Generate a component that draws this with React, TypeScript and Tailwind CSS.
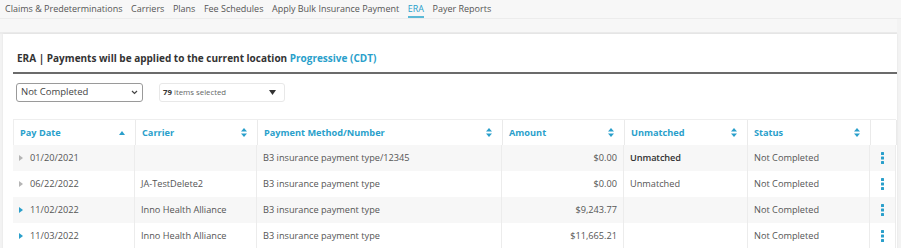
import React from 'react';

const teal = 'text-[#2a9fcb]';

const navItems = ['Claims & Predeterminations', 'Carriers', 'Plans', 'Fee Schedules', 'Apply Bulk Insurance Payment', 'ERA', 'Payer Reports'];

type Row = { date: string; carrier: string; method: string; amount: string; unmatched: string; strongUnmatched?: boolean; active: boolean };

const rows: Row[] = [
    { date: '01/20/2021', carrier: '', method: 'B3 insurance payment type/12345', amount: '$0.00', unmatched: 'Unmatched', strongUnmatched: true, active: false },
    { date: '06/22/2022', carrier: 'JA-TestDelete2', method: 'B3 insurance payment type', amount: '$0.00', unmatched: 'Unmatched', active: false },
    { date: '11/02/2022', carrier: 'Inno Health Alliance', method: 'B3 insurance payment type', amount: '$9,243.77', unmatched: '', active: true },
    { date: '11/03/2022', carrier: 'Inno Health Alliance', method: 'B3 insurance payment type', amount: '$11,665.21', unmatched: '', active: true },
];

const cols = 'grid grid-cols-[122px_122px_245px_122px_123px_123px_26px]';

const SortBoth = () => (
    <svg width="6" height="9" viewBox="0 0 6 9" className="fill-[#2a9fcb]">
        <path d="M3 0 L6 3.5 L0 3.5 Z" />
        <path d="M3 9 L6 5.5 L0 5.5 Z" />
    </svg>
);

const SortUp = () => (
    <svg width="6" height="4" viewBox="0 0 6 4" className="fill-[#2a9fcb]">
        <path d="M3 0 L6 4 L0 4 Z" />
    </svg>
);

const Kebab = () => (
    <svg width="3" height="12" viewBox="0 0 3 12" className="fill-[#2a9fcb]">
        <rect x="0" y="0" width="3" height="3" rx="0.5" />
        <rect x="0" y="4.5" width="3" height="3" rx="0.5" />
        <rect x="0" y="9" width="3" height="3" rx="0.5" />
    </svg>
);

const Header = ({ label, sort, border = true }: { label: string; sort?: 'up' | 'both'; border?: boolean }) => (
    <div className={`flex items-center justify-between px-[6px] h-full ${border ? 'border-r border-[#eaeaea]' : ''}`}>
        <span className={`font-bold ${teal}`}>{label}</span>
        {sort === 'up' && <span className="mr-[4px]"><SortUp /></span>}
        {sort === 'both' && <span className="mr-[4px]"><SortBoth /></span>}
    </div>
);

const App: React.FC = () => {
    return (
        <div className="w-[901px] h-[248px] overflow-hidden bg-[#f3f3f3] font-['Open_Sans',sans-serif] text-[#555]">
            {/* top nav */}
            <div className="h-[19px] flex items-end gap-[8.5px] pl-[5px] text-[9px] bg-[#f7f7f7] border-b border-[#ececec]">
                {navItems.map(item => (
                    <div
                        key={item}
                        className={`leading-[15px] ${item === 'ERA' ? `${teal} border-b-2 border-[#5bb9d6]` : 'border-b-2 border-transparent'}`}
                    >
                        {item}
                    </div>
                ))}
            </div>
            <div className="h-[15px] bg-[#f7f7f7] border-b-2 border-[#ebebeb] mr-[4px]" />

            {/* card */}
            <div className="ml-[3px] mr-[4px] h-[220px] bg-white shadow-[0_0_2px_rgba(0,0,0,0.08)] pl-[10px]">
                <div className="pt-[16px] pl-[4px] text-[10px] font-bold text-[#333] leading-[16px]">
                    ERA | Payments will be applied to the current location <span className={teal}>Progressive (CDT)</span>
                </div>
                <div className="mt-[6px] h-[2px] bg-[#6b6b6b]" />

                <div className="flex items-center gap-[16px] mt-[9px] pl-[3px]">
                    <div className="w-[127px] h-[19px] border border-[#9a9a9a] rounded-[3px] flex items-center justify-between px-[4px] text-[9.5px] text-[#444]">
                        <span>Not Completed</span>
                        <svg width="7" height="5" viewBox="0 0 7 5" className="stroke-[#444] fill-none">
                            <path d="M1 1 L3.5 3.5 L6 1" strokeWidth="1.2" />
                        </svg>
                    </div>
                    <div className="w-[126px] h-[19px] border border-[#e8e8e8] rounded-[3px] flex items-center justify-between pl-[3px] pr-[8px] text-[7.8px] text-[#666]">
                        <span><b className="text-[#333]">79</b> items selected</span>
                        <svg width="7" height="5" viewBox="0 0 7 5" className="fill-[#333]">
                            <path d="M0 0 L7 0 L3.5 5 Z" />
                        </svg>
                    </div>
                </div>

                {/* table */}
                <div className="mt-[17px] w-[883px] text-[9.2px]">
                    <div className={`${cols} h-[26px] border-t border-l border-[#eeeeee] items-center`}>
                        <Header label="Pay Date" sort="up" />
                        <Header label="Carrier" sort="both" />
                        <Header label="Payment Method/Number" sort="both" />
                        <Header label="Amount" sort="both" />
                        <Header label="Unmatched" sort="both" />
                        <Header label="Status" sort="both" />
                        <div className="h-full border-r border-[#eaeaea]" />
                    </div>
                    {rows.map((r, i) => (
                        <div key={i} className={`${cols} h-[26px] items-center ${i % 2 === 0 ? 'bg-[#f7f7f7]' : 'bg-white'}`}>
                            <div className="flex items-center h-full pl-[6px] border-r border-[#ececec]">
                                <svg width="4" height="6" viewBox="0 0 4 6" className={r.active ? 'fill-[#2a9fcb]' : 'fill-[#b5b5b5]'}>
                                    <path d="M0 0 L4 3 L0 6 Z" />
                                </svg>
                                <span className="ml-[7px]">{r.date}</span>
                            </div>
                            <div className="flex items-center h-full px-[6px] border-r border-[#ececec]">{r.carrier}</div>
                            <div className="flex items-center h-full px-[6px] border-r border-[#ececec]">{r.method}</div>
                            <div className="flex items-center justify-end h-full px-[6px] border-r border-[#ececec]">{r.amount}</div>
                            <div className={`flex items-center h-full px-[6px] ${r.strongUnmatched ? 'text-[#333] font-semibold tracking-[-0.1px]' : ''}`}>{r.unmatched}</div>
                            <div className="flex items-center h-full px-[6px] border-l border-r border-[#ececec]">Not Completed</div>
                            <div className="flex items-center justify-center h-full border-r border-[#ececec]">
                                <Kebab />
                            </div>
                        </div>
                    ))}
                </div>
            </div>
        </div>
    );
};

export default App;
